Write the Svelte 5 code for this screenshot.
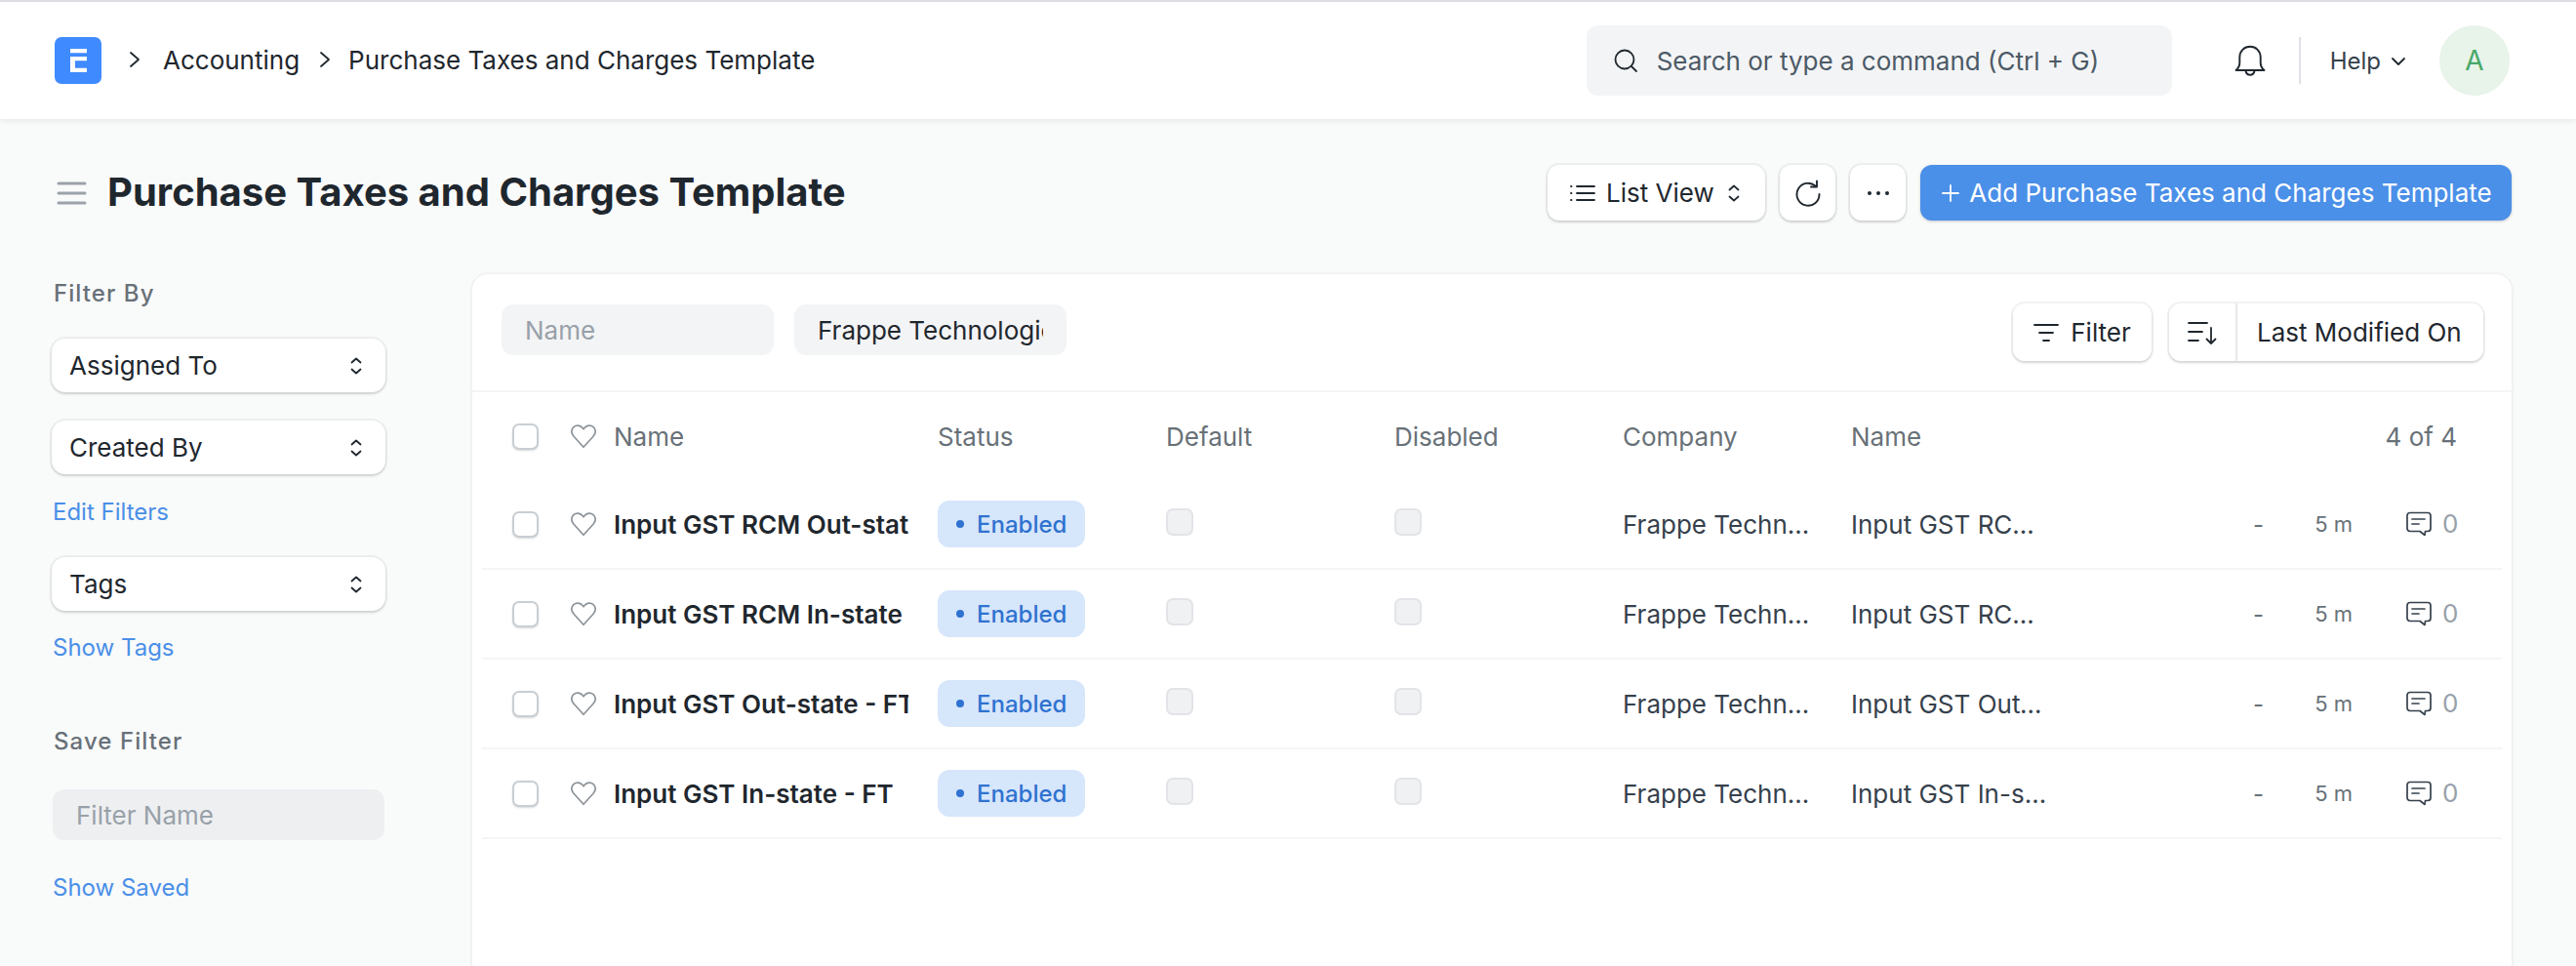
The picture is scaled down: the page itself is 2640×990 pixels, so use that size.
<script>
	const rows = [
		{ name: 'Input GST RCM Out-state - FT', ref: 'Input GST RCM Out-state - FT' },
		{ name: 'Input GST RCM In-state - FT', ref: 'Input GST RCM In-state - FT' },
		{ name: 'Input GST Out-state - FT', ref: 'Input GST Out-state - FT' },
		{ name: 'Input GST In-state - FT', ref: 'Input GST In-state - FT' }
	];
</script>

{#snippet updown()}
	<svg class="updown" width="16" height="24" viewBox="0 0 16 24" fill="none" stroke="currentColor" stroke-width="1.8" stroke-linecap="round" stroke-linejoin="round">
		<path d="M3.500 8.500 8 4.500l4.500 4" />
		<path d="M3.500 15.500l4.500 4 4.500-4" />
	</svg>
{/snippet}

{#snippet heart()}
	<svg class="heart" width="26" height="26" viewBox="1 1 26 24.500" fill="none" stroke="#8d949a" stroke-width="1.7" stroke-linejoin="round">
		<path d="M14 24.500 3.800 13.200C1 10.300 1.300 6.200 3.900 3.900 6.600 1.600 10.600 2 13 4.800L14 6l1-1.200c2.400-2.800 6.400-3.200 9.100-.9 2.600 2.300 2.900 6.400.1 9.300Z" />
	</svg>
{/snippet}

<div class="page">
	<header class="navbar">
		<svg class="logo" width="48" height="48" viewBox="0 0 48 48">
			<rect width="48" height="48" rx="7" fill="#3f8aff" />
			<path d="M16 12h17v4.200H16zM16 20h17v4.200H21v7.600h12V36H16z" fill="#fff" />
		</svg>
		<svg class="crumb-sep first" width="14" height="24" viewBox="0 0 14 24" fill="none" stroke="#1f272e" stroke-width="1.8" stroke-linecap="round" stroke-linejoin="round"><path d="M3 5l8 7-8 7" /></svg>
		<span class="crumb">Accounting</span>
		<svg class="crumb-sep" width="14" height="24" viewBox="0 0 14 24" fill="none" stroke="#1f272e" stroke-width="1.8" stroke-linecap="round" stroke-linejoin="round"><path d="M3 5l8 7-8 7" /></svg>
		<span class="crumb">Purchase Taxes and Charges Template</span>

		<div class="search">
			<svg width="26" height="26" viewBox="0 0 26 26" fill="none" stroke="#1f272e" stroke-width="1.800" stroke-linecap="round"><circle cx="12" cy="12" r="9.500" /><path d="M19 19l5 5" /></svg>
			<span>Search or type a command (Ctrl + G)</span>
		</div>

		<svg class="bell" width="34" height="34" viewBox="0 0 34 34" fill="none" stroke="#1f272e" stroke-width="1.900" stroke-linecap="round" stroke-linejoin="round">
			<path d="M2.500 27h29c-2.600-2-3.800-4.200-3.800-8v-5.500C27.700 7.300 23 2.800 17 2.800S6.300 7.300 6.300 13.500V19c0 3.800-1.200 6-3.800 8Z" />
			<path d="M12.500 27.500c.4 2.700 2.200 4.200 4.500 4.200s4.100-1.500 4.500-4.200" />
		</svg>
		<div class="nav-divider"></div>
		<span class="help">Help</span>
		<svg class="help-chev" width="18" height="12" viewBox="0 0 18 12" fill="none" stroke="#1f272e" stroke-width="1.800" stroke-linecap="round" stroke-linejoin="round"><path d="M3 3l6 6 6-6" /></svg>
		<div class="avatar">A</div>
	</header>

	<div class="page-head">
		<svg class="menu" width="32" height="26" viewBox="0 0 32 26" fill="none" stroke="#9ba2a9" stroke-width="3" stroke-linecap="round"><path d="M2 3h27M2 13h27M2 23h27" /></svg>
		<h1>Purchase Taxes and Charges Template</h1>
		<div class="head-actions">
			<button class="btn list-view">
				<svg width="28" height="24" viewBox="0 0 28 24" fill="none" stroke="#1f272e" stroke-width="1.800" stroke-linecap="round"><path d="M8 5h18M8 12h18M8 19h18M2 5h.500M2 12h.500M2 19h.500" /></svg>
				List View
				{@render updown()}
			</button>
			<button class="btn icon-btn" aria-label="Refresh">
				<svg width="28" height="28" viewBox="0 0 28 28" fill="none" stroke="#1f272e" stroke-width="1.900" stroke-linecap="round" stroke-linejoin="round">
					<path d="M21.500 6.500A11.500 11.500 0 1 0 25.500 15" />
					<path d="M23 1.500v6h-6" />
				</svg>
			</button>
			<button class="btn icon-btn" aria-label="Menu">
				<svg width="24" height="6" viewBox="0 0 24 6" fill="#1f272e"><circle cx="3" cy="3" r="2" /><circle cx="12" cy="3" r="2" /><circle cx="21" cy="3" r="2" /></svg>
			</button>
			<button class="btn primary">
				<svg width="22" height="22" viewBox="0 0 22 22" fill="none" stroke="#fff" stroke-width="1.800" stroke-linecap="round"><path d="M11 3v16M3 11h16" /></svg>
				Add Purchase Taxes and Charges Template
			</button>
		</div>
	</div>

	<div class="layout">
		<aside class="sidebar">
			<h2>Filter By</h2>
			<div class="side-select">Assigned To {@render updown()}</div>
			<div class="side-select second">Created By {@render updown()}</div>
			<a class="side-link edit" href="#edit">Edit Filters</a>
			<div class="side-select tags">Tags {@render updown()}</div>
			<a class="side-link show-tags" href="#tags">Show Tags</a>
			<h2 class="save">Save Filter</h2>
			<input class="filter-name" placeholder="Filter Name" />
			<a class="side-link show-saved" href="#saved">Show Saved</a>
		</aside>

		<main class="card">
			<div class="filter-bar">
				<input class="field" placeholder="Name" />
				<input class="field" value="Frappe Technologies" />
				<button class="btn filter-btn">
					<svg width="26" height="22" viewBox="0 0 26 22" fill="none" stroke="#1f272e" stroke-width="1.800" stroke-linecap="round"><path d="M1 3h24M6 11h14M10 19h6" /></svg>
					Filter
				</button>
				<div class="btn sort-group">
					<span class="sort-icon">
						<svg width="30" height="26" viewBox="0 0 30 26" fill="none" stroke="#1f272e" stroke-width="1.800" stroke-linecap="round" stroke-linejoin="round"><path d="M1 3h19M1 12h14M1 21h10M24 8v16M19.500 19.500 24 24l4.500-4.500" /></svg>
					</span>
					<span class="sort-label">Last Modified On</span>
				</div>
			</div>

			<div class="row head">
				<span class="check"></span>
				{@render heart()}
				<span class="col-name">Name</span>
				<span class="col">Status</span>
				<span class="col">Default</span>
				<span class="col">Disabled</span>
				<span class="col">Company</span>
				<span class="col">Name</span>
				<span class="count">4 of 4</span>
			</div>

			{#each rows as row}
				<div class="row item">
					<span class="check"></span>
					{@render heart()}
					<span class="col-name strong">{row.name}</span>
					<span class="col"><span class="badge"><i></i>Enabled</span></span>
					<span class="col"><span class="box"></span></span>
					<span class="col"><span class="box"></span></span>
					<span class="col"><span class="trunc company">Frappe Technologies</span></span>
					<span class="col"><span class="trunc">{row.ref}</span></span>
					<span class="dash">-</span>
					<span class="age">5 m</span>
					<svg class="comment" width="28" height="26" viewBox="0 0 28 26" fill="none" stroke="#36414c" stroke-width="1.700" stroke-linecap="round" stroke-linejoin="round">
						<path d="M5 1.500h18c1.900 0 3 1.100 3 3v13c0 1.900-1.100 3-3 3h-2.500l-.5 4-5-4H5c-1.900 0-3-1.100-3-3v-13c0-1.900 1.100-3 3-3Z" />
						<path d="M7 8h13M7 13h7" />
					</svg>
					<span class="comment-count">0</span>
				</div>
			{/each}
		</main>
	</div>
</div>

<style>
	:global(body) {
		margin: 0;
		background: #f9fafa;
		overflow: hidden;
	}

	.page {
		height: 990px;
		overflow: hidden;
		display: flex;
		flex-direction: column;
		font-family: Inter, 'Noto Sans', sans-serif;
		font-size: 26px;
		color: #1f272e;
		background: #f9fafa;
	}

	svg {
		flex: none;
		display: block;
	}

	input {
		font: inherit;
		color: #1f272e;
		border: none;
		outline: none;
	}

	input::placeholder {
		color: #98a1a9;
		opacity: 1;
	}

	.navbar {
		box-sizing: border-box;
		height: 122px;
		flex: none;
		display: flex;
		align-items: center;
		padding: 0 68px 0 56px;
		background: #fff;
		border-top: 2px solid #dcdde3;
		box-shadow: 0 2px 6px rgba(25, 39, 52, 0.08);
	}

	.crumb-sep {
		margin: -2px 17px 0 19px;
	}

	.crumb-sep.first {
		margin-left: 27px;
		margin-right: 22px;
	}

	.crumb {
		margin-top: -2px;
	}

	.search {
		box-sizing: border-box;
		width: 600px;
		height: 72px;
		margin-left: auto;
		display: flex;
		align-items: center;
		gap: 19px;
		padding-left: 27px;
		background: #f3f4f5;
		border-radius: 12px;
		color: #4c5a67;
	}

	.bell {
		margin-left: 63px;
	}

	.nav-divider {
		width: 2px;
		height: 48px;
		margin: 0 30px 0 33px;
		background: #dfe1e6;
	}

	.help {
		font-size: 24px;
		color: #36414c;
	}

	.help-chev {
		margin: 2px 0 0 9px;
	}

	.avatar {
		width: 72px;
		height: 72px;
		margin-left: 33px;
		border-radius: 50%;
		display: flex;
		align-items: center;
		justify-content: center;
		background: #e8f3ea;
		color: #48a868;
		font-size: 28px;
	}

	.page-head {
		height: 57px;
		flex: none;
		display: flex;
		align-items: center;
		margin: 47px 66px 55px 56px;
	}

	.menu {
		margin-left: 2px;
	}

	h1 {
		margin: -3px 0 0 20px;
		font-size: 40px;
		font-weight: 700;
	}

	.head-actions {
		margin-left: auto;
		display: flex;
		gap: 15px;
	}

	.btn {
		box-sizing: border-box;
		height: 57px;
		display: flex;
		align-items: center;
		justify-content: center;
		border: none;
		border-radius: 12px;
		background: #fff;
		color: #1f272e;
		font: inherit;
		box-shadow: 0 0 0 2px rgba(0, 0, 0, 0.05), 0 2px 3px rgba(0, 0, 0, 0.12);
	}

	.list-view {
		width: 223px;
		gap: 10px;
		justify-content: flex-start;
		padding: 0 0 0 22px;
	}

	.list-view :global(.updown) {
		margin-left: 2px;
	}

	.updown {
		color: #1f272e;
	}

	.icon-btn {
		width: 57px;
	}

	.primary {
		width: 606px;
		gap: 8px;
		background: #4a8fe8;
		color: #fff;
		box-shadow: 0 1px 3px rgba(0, 0, 0, 0.2);
	}

	.layout {
		flex: 1;
		min-height: 0;
		display: flex;
		align-items: stretch;
		padding: 0 66px 0 53px;
		gap: 89px;
	}

	.sidebar {
		width: 342px;
		flex: none;
		display: flex;
		flex-direction: column;
	}

	h2 {
		margin: 6px 0 0 2px;
		font-size: 24px;
		line-height: 28px;
		font-weight: 500;
		letter-spacing: 0.045em;
		color: #687178;
	}

	.side-select {
		box-sizing: border-box;
		height: 55px;
		margin-top: 32px;
		display: flex;
		align-items: center;
		justify-content: space-between;
		padding: 0 22px 0 18px;
		background: #fff;
		border-radius: 14px;
		box-shadow: 0 0 0 2px rgba(0, 0, 0, 0.05), 0 2px 3px rgba(0, 0, 0, 0.12);
	}

	.side-select.second {
		margin-top: 29px;
	}

	.side-select.tags {
		margin-top: 32px;
	}

	.side-link {
		margin-left: 1px;
		font-size: 24px;
		line-height: 28px;
		color: #4a8fe8;
		text-decoration: none;
	}

	.edit {
		margin-top: 25px;
	}

	.show-tags {
		margin-top: 24px;
	}

	h2.save {
		margin-top: 68px;
	}

	.filter-name {
		box-sizing: border-box;
		height: 52px;
		margin: 35px 1px 0;
		padding: 0 24px;
		background: #eeeff1;
		border-radius: 12px;
	}

	.show-saved {
		margin-top: 35px;
	}

	.card {
		flex: 1;
		min-width: 0;
		background: #fff;
		border-radius: 16px 16px 0 0;
		box-shadow: 0 0 0 2px rgba(0, 0, 0, 0.02), 0 1px 4px rgba(0, 0, 0, 0.05);
	}

	.filter-bar {
		box-sizing: border-box;
		height: 121px;
		display: flex;
		align-items: center;
		padding: 0 29px 0 30px;
		border-bottom: 2px solid #f4f5f6;
	}

	.field {
		box-sizing: border-box;
		width: 279px;
		height: 52px;
		margin: -5px 21px 0 0;
		padding: 0 24px;
		background: #f3f4f5;
		border-radius: 12px;
	}

	.filter-btn {
		width: 142px;
		height: 59px;
		margin-left: auto;
		gap: 12px;
	}

	.sort-group {
		width: 322px;
		height: 59px;
		margin-left: 18px;
		justify-content: flex-start;
	}

	.sort-icon {
		box-sizing: border-box;
		width: 70px;
		height: 100%;
		display: flex;
		align-items: center;
		justify-content: center;
		border-right: 2px solid #e8e9eb;
	}

	.sort-label {
		padding-left: 20px;
		white-space: nowrap;
	}

	.row {
		box-sizing: border-box;
		display: flex;
		align-items: center;
		margin: 0 10px;
		padding-left: 31px;
	}

	.row.head {
		height: 90px;
		color: #687178;
	}

	.row.item {
		height: 92px;
		border-bottom: 2px solid #f4f5f6;
	}

	.check {
		box-sizing: border-box;
		width: 27px;
		height: 27px;
		flex: none;
		background: #fff;
		border: 2px solid #c9ced3;
		border-radius: 7px;
		box-shadow: 0 1px 2px rgba(0, 0, 0, 0.15);
	}

	.heart {
		margin-left: 33px;
	}

	.col-name {
		width: 302px;
		flex: none;
		margin: 0 30px 0 18px;
		overflow: hidden;
		white-space: nowrap;
	}

	.strong {
		font-weight: 600;
	}

	.col {
		width: 234px;
		flex: none;
		display: flex;
		align-items: center;
	}

	.badge {
		height: 48px;
		display: inline-flex;
		align-items: center;
		padding: 0 19px;
		border-radius: 12px;
		background: #d6e6fb;
		color: #2f72d0;
		font-size: 24px;
		font-weight: 500;
		white-space: nowrap;
	}

	.badge i {
		width: 8px;
		height: 8px;
		margin-right: 13px;
		border-radius: 50%;
		background: #2f72d0;
	}

	.box {
		box-sizing: border-box;
		width: 28px;
		height: 28px;
		margin-top: -4px;
		background: #f0f1f2;
		border: 2px solid #e2e4e8;
		border-radius: 7px;
	}

	.trunc {
		width: 204px;
		overflow: hidden;
		text-overflow: ellipsis;
		white-space: nowrap;
		color: #36414c;
	}

	.count {
		margin-left: auto;
		margin-right: 46px;
	}

	.dash {
		margin-left: auto;
		color: #687178;
		font-size: 24px;
	}

	.age {
		margin-left: 52px;
		color: #687178;
		font-size: 22px;
	}

	.comment {
		margin-left: 54px;
	}

	.comment-count {
		width: 16px;
		margin: -2px 45px 0 10px;
		color: #98a1a9;
	}
</style>
